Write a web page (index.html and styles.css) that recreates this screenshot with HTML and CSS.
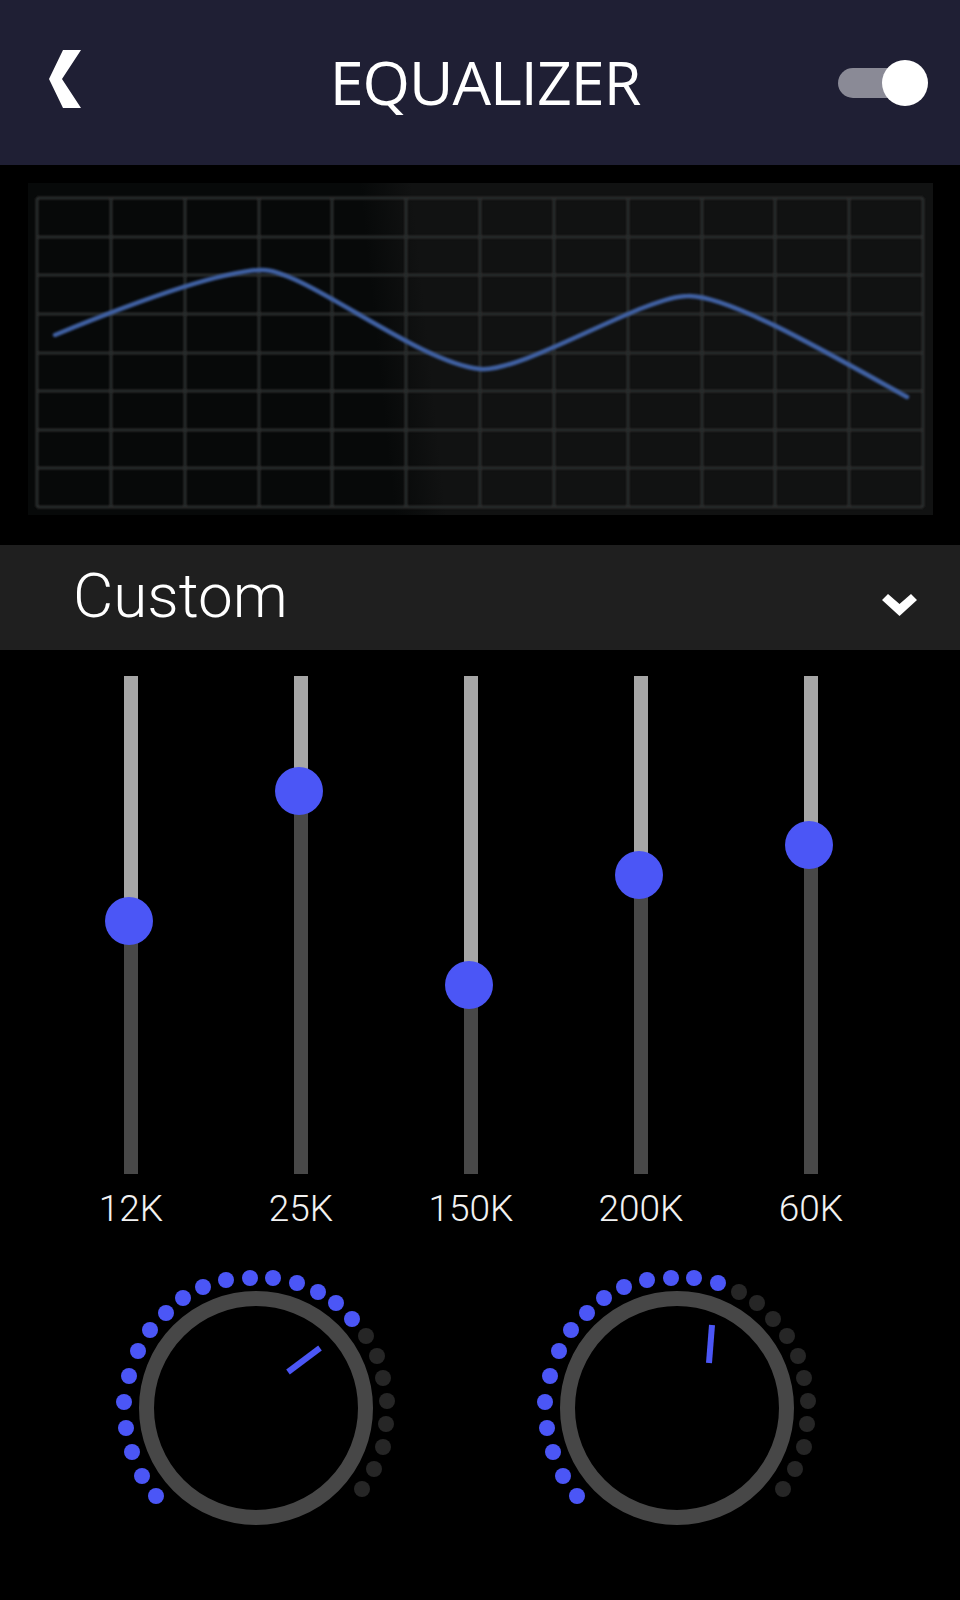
FILE: index.html
```html
<!DOCTYPE html>
<html lang="en">

<head>
  <meta charset="UTF-8">
  <meta name="viewport" content="width=device-width, initial-scale=1.0">
  <title>Equalizer</title>
  <link rel="stylesheet" href="styles.css">
</head>

<body>
  <header class="topbar">
    <a class="back">
      <svg width="40" height="64" viewBox="0 0 40 64">
        <polygon points="15,1 33,1 14,30 33,59 15,59 1,30" fill="#fff" />
      </svg>
    </a>
    <h1 class="title">EQUALIZER</h1>
    <div class="toggle"></div>
  </header>

  <section class="graph-wrap">
    <div class="graph">
      <svg width="905" height="332" viewBox="0 0 905 332">
        <defs>
          <filter id="soft"><feGaussianBlur stdDeviation="0.8" /></filter>
        </defs>
        <path class="grid-lines" filter="url(#soft)" d="
          M9 15V324 M83 15V324 M157 15V324 M231 15V324 M304 15V324 M378 15V324 M452 15V324
          M526 15V324 M600 15V324 M674 15V324 M747 15V324 M821 15V324 M895 15V324
          M9 15H895 M9 54H895 M9 92H895 M9 131H895 M9 170H895 M9 208H895 M9 247H895 M9 285H895 M9 324H895" />
        <path class="curve" filter="url(#soft)"
          d="M27 152 C100 122, 190 88, 234 87 C275 86, 390 180, 452 186 C495 190, 615 113, 660 113 C700 112, 800 170, 879 214" />
      </svg>
    </div>
  </section>

  <div class="preset">
    <span class="preset-name">Custom</span>
    <svg class="caret" width="35" height="22" viewBox="0 0 35 22">
      <path d="M0 6 L6 0 L17.5 10 L29 0 L35 6 L17.5 22 Z" fill="#fff" />
    </svg>
  </div>

  <section class="bands">
    <div class="band">
      <div class="track" style="--v: 245px"><span class="thumb"></span></div>
      <span class="band-label">12K</span>
    </div>
    <div class="band">
      <div class="track" style="--v: 115px"><span class="thumb"></span></div>
      <span class="band-label">25K</span>
    </div>
    <div class="band">
      <div class="track" style="--v: 309px"><span class="thumb"></span></div>
      <span class="band-label">150K</span>
    </div>
    <div class="band">
      <div class="track" style="--v: 199px"><span class="thumb"></span></div>
      <span class="band-label">200K</span>
    </div>
    <div class="band">
      <div class="track" style="--v: 169px"><span class="thumb"></span></div>
      <span class="band-label">60K</span>
    </div>
  </section>

  <section class="knobs">
    <!-- bass knob -->
    <svg class="knob" width="290" height="290" viewBox="0 0 290 290">
      <circle class="dot on" cx="45" cy="233" r="8" />
      <circle class="dot on" cx="31" cy="213" r="8" />
      <circle class="dot on" cx="21" cy="189" r="8" />
      <circle class="dot on" cx="15" cy="165" r="8" />
      <circle class="dot on" cx="13" cy="139" r="8" />
      <circle class="dot on" cx="18" cy="113" r="8" />
      <circle class="dot on" cx="27" cy="88" r="8" />
      <circle class="dot on" cx="39" cy="67" r="8" />
      <circle class="dot on" cx="55" cy="50" r="8" />
      <circle class="dot on" cx="72" cy="35" r="8" />
      <circle class="dot on" cx="92" cy="24" r="8" />
      <circle class="dot on" cx="115" cy="17" r="8" />
      <circle class="dot on" cx="139" cy="15" r="8" />
      <circle class="dot on" cx="162" cy="15" r="8" />
      <circle class="dot on" cx="186" cy="20" r="8" />
      <circle class="dot on" cx="207" cy="29" r="8" />
      <circle class="dot on" cx="225" cy="40" r="8" />
      <circle class="dot on" cx="241" cy="56" r="8" />
      <circle class="dot" cx="255" cy="73" r="8" />
      <circle class="dot" cx="266" cy="93" r="8" />
      <circle class="dot" cx="272" cy="115" r="8" />
      <circle class="dot" cx="276" cy="138" r="8" />
      <circle class="dot" cx="275" cy="161" r="8" />
      <circle class="dot" cx="272" cy="184" r="8" />
      <circle class="dot" cx="263" cy="206" r="8" />
      <circle class="dot" cx="251" cy="226" r="8" />
      <circle class="ring" cx="145" cy="145" r="109.5" />
      <line class="pointer" x1="177" y1="109" x2="209" y2="85" />
    </svg>
    <!-- treble knob -->
    <svg class="knob" width="290" height="290" viewBox="0 0 290 290">
      <circle class="dot on" cx="45" cy="233" r="8" />
      <circle class="dot on" cx="31" cy="213" r="8" />
      <circle class="dot on" cx="21" cy="189" r="8" />
      <circle class="dot on" cx="15" cy="165" r="8" />
      <circle class="dot on" cx="13" cy="139" r="8" />
      <circle class="dot on" cx="18" cy="113" r="8" />
      <circle class="dot on" cx="27" cy="88" r="8" />
      <circle class="dot on" cx="39" cy="67" r="8" />
      <circle class="dot on" cx="55" cy="50" r="8" />
      <circle class="dot on" cx="72" cy="35" r="8" />
      <circle class="dot on" cx="92" cy="24" r="8" />
      <circle class="dot on" cx="115" cy="17" r="8" />
      <circle class="dot on" cx="139" cy="15" r="8" />
      <circle class="dot on" cx="162" cy="15" r="8" />
      <circle class="dot on" cx="186" cy="20" r="8" />
      <circle class="dot" cx="207" cy="29" r="8" />
      <circle class="dot" cx="225" cy="40" r="8" />
      <circle class="dot" cx="241" cy="56" r="8" />
      <circle class="dot" cx="255" cy="73" r="8" />
      <circle class="dot" cx="266" cy="93" r="8" />
      <circle class="dot" cx="272" cy="115" r="8" />
      <circle class="dot" cx="276" cy="138" r="8" />
      <circle class="dot" cx="275" cy="161" r="8" />
      <circle class="dot" cx="272" cy="184" r="8" />
      <circle class="dot" cx="263" cy="206" r="8" />
      <circle class="dot" cx="251" cy="226" r="8" />
      <circle class="ring" cx="145" cy="145" r="109.5" />
      <line class="pointer" x1="177" y1="100" x2="180" y2="62" />
    </svg>
  </section>
</body>

</html>
```

FILE: styles.css
```css
body {
  margin: 0;
  background-color: #000;
  color: #fff;
  font-family: Roboto, "Liberation Sans", sans-serif;
  min-height: 1600px;
}

.topbar {
  height: 165px;
  background-color: #1f1f34;
  display: grid;
  grid-template-columns: 1fr auto 1fr;
  align-items: center;
}

.back {
  display: flex;
  padding-left: 48px;
  padding-bottom: 3px;
}

.title {
  margin: 0;
  padding-left: 10px;
  padding-bottom: 3px;
  font-family: "Open Sans", "Noto Sans", sans-serif;
  font-weight: 400;
  font-size: 61px;
  line-height: 61px;
  letter-spacing: -1px;
}

.toggle {
  justify-self: end;
  margin-right: 32px;
  width: 90px;
  height: 46px;
  position: relative;
}

.toggle::before {
  content: "";
  position: absolute;
  left: 0;
  top: 8px;
  width: 72px;
  height: 30px;
  border-radius: 15px;
  background-color: #8a8a96;
}

.toggle::after {
  content: "";
  position: absolute;
  right: 0;
  top: 0;
  width: 46px;
  height: 46px;
  border-radius: 50%;
  background-color: #fff;
}

.graph-wrap {
  padding: 18px 27px 0 28px;
}

.graph {
  width: 905px;
  height: 332px;
  background: linear-gradient(84deg, #070909 0%, #070909 39%, #111212 44.5%, #111212 100%);
}

.graph svg {
  display: block;
}

.grid-lines {
  fill: none;
  stroke: #2c2d2d;
  stroke-width: 3;
}

.curve {
  fill: none;
  stroke: #4061a2;
  stroke-width: 4.5;
  stroke-linecap: round;
}

.preset {
  margin-top: 30px;
  height: 105px;
  background-color: #1f1f1f;
  display: flex;
  align-items: center;
  justify-content: space-between;
  padding: 0 43px 0 73px;
}

.preset-name {
  font-weight: 300;
  font-size: 62px;
  line-height: 62px;
  padding-bottom: 4px;
}

.caret {
  margin-top: 14px;
}

.bands {
  display: grid;
  grid-template-columns: repeat(5, 170px);
  padding: 26px 0 0 46px;
}

.band {
  display: flex;
  flex-direction: column;
  align-items: center;
}

.track {
  position: relative;
  width: 14px;
  height: 498px;
  background: linear-gradient(#a6a6a6 0, #a6a6a6 var(--v), #484848 var(--v), #484848 100%);
}

.thumb {
  position: absolute;
  left: -19px;
  top: calc(var(--v) - 24px);
  width: 48px;
  height: 48px;
  border-radius: 50%;
  background-color: #4b56f6;
}

.band-label {
  margin-top: 13px;
  font-weight: 300;
  font-size: 37px;
  line-height: 44px;
  color: #f2f2f2;
}

.knobs {
  display: flex;
  gap: 131px;
  padding: 32px 0 0 111px;
}

.knob {
  display: block;
}

.dot {
  fill: #262626;
}

.dot.on {
  fill: #4b56f6;
}

.ring {
  fill: none;
  stroke: #474747;
  stroke-width: 15;
}

.pointer {
  stroke: #4b56f6;
  stroke-width: 6;
}
```
